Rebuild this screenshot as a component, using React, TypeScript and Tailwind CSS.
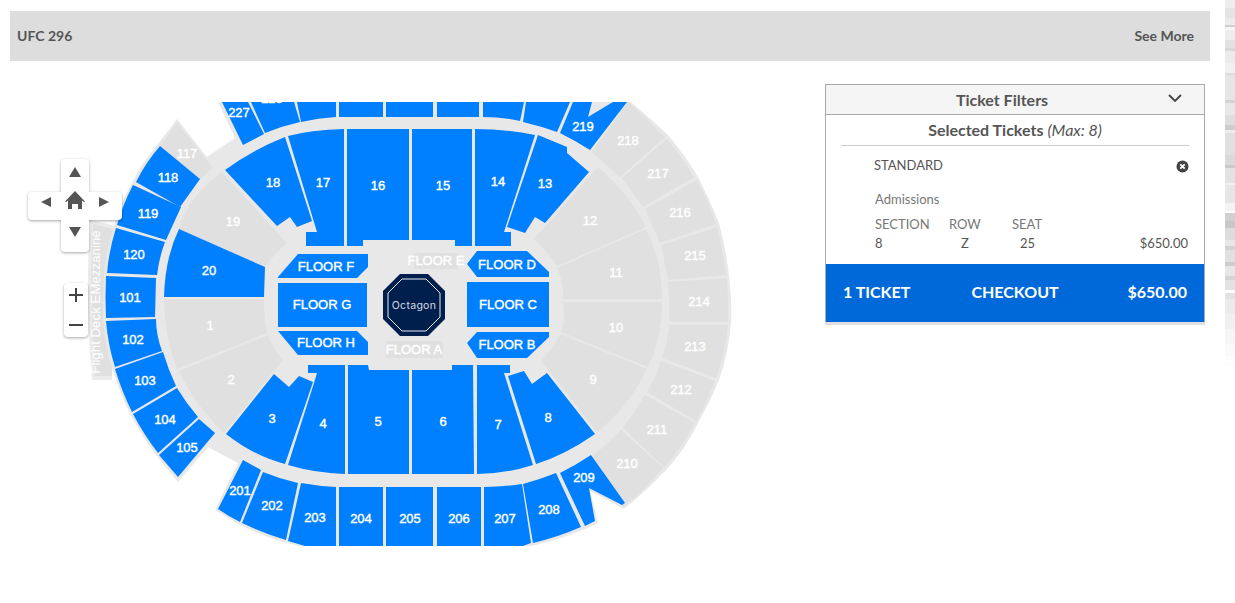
const BLUE = "#007fff";
const GRAY = "#e0e0e0";

const blue: string[] = [
  "M179,229 L265,267 L264,297 L164,297 Q165,258 179,229Z",
  "M274,374 L289,387 L299,376 L313,382 L285,464 Q254,456 226,434Z",
  "M308,365 L345,365 L345,474 Q315,473 288,465 L314,383 L317,373 L308,373Z",
  "M348,365 L368,365 L369,370 L409,370 L409,474 L348,474Z",
  "M412,370 L452,370 L452,365 L473,365 L474,474 L412,474Z",
  "M477,365 L510,365 L510,373 L504,373 L533,465 Q505,474 477,474Z",
  "M508,376 L524,371 L532,384 L547,373 L595,434 Q565,455 536,464Z",
  "M538,135 L567,147 L567,153 L589,172 L545,223 L535,217 L525,233 L507,227Z",
  "M475,129 Q505,129 535,135 L504,232 L511,232 L511,246 L475,246Z",
  "M412,129 L472,129 L472,246 L455,246 L455,240 L412,240Z",
  "M347,129 L409,129 L409,240 L363,240 L363,246 L347,246Z",
  "M288,136 Q310,130 344,129 L344,246 L306,246 L306,232 L317,232Z",
  "M225,170 Q252,150 285,137 L312,221 L297,227 L290,217 L277,226Z",
  "M160,146 L200,179 L180,207 L136,182 Q146,162 160,146Z",
  "M133,185 L181,207 L166,240 L117,225 Q123,204 133,185Z",
  "M116,228 L165,242 Q159,258 157,275 L107,273 Q109,250 116,228Z",
  "M106,276 L156,278 L155,317 L106,318 Q105,297 106,276Z",
  "M106,321 L156,319 Q156,335 162,351 L115,367 Q108,345 106,321Z",
  "M115,369 L163,352 Q168,369 176,386 L132,412 Q122,392 115,369Z",
  "M133,414 L177,388 Q186,403 198,417 L158,453 Q144,435 133,414Z",
  "M159,455 L199,419 L215,433 L178,477Z",
  "M222,102 L248,102 L264,134 L243,145Z",
  "M251,102 L294,102 L300,122 Q282,126 265,133Z",
  "M297,102 L336,102 L336,117 Q318,118 301,122Z",
  "M339,102 L383,102 L383,117 L339,117Z",
  "M386,102 L433,102 L433,117 L386,117Z",
  "M437,102 L479,102 L479,117 L437,117Z",
  "M483,102 L524,102 L520,121 Q502,117 483,117Z",
  "M526,102 L570,102 L557,132 Q540,126 523,122Z",
  "M573,102 L592,102 L588,117 L613,102 L627,102 L590,150 Q576,141 560,133Z",
  "M243,460 L261,470 L240,522 Q228,516 218,509Z",
  "M263,472 Q280,479 298,483 L286,540 Q263,533 242,523Z",
  "M301,483 Q318,486 336,487 L336,546 L305,546 L288,541Z",
  "M339,487 L383,487 L383,546 L339,546Z",
  "M386,487 L433,487 L433,546 L386,546Z",
  "M437,487 L481,487 L481,546 L437,546Z",
  "M484,487 Q503,487 522,484 L531,543 L523,546 L484,546Z",
  "M523,484 Q541,479 556,473 L581,527 Q558,537 533,543Z",
  "M560,473 Q576,465 591,455 L625,503 L622,505 L589,488 L595,521 L585,526Z",
  "M298,254 L368,254 L368,267 L357,278 L278,278 L278,277Z",
  "M278,283 H367 V327 H278Z",
  "M278,331 L357,331 L368,342 L368,355 L298,355Z",
  "M467,264 L477,251 L527,251 L549,272 L549,277 L477,277Z",
  "M467,282 H549 V327 H467Z",
  "M467,343 L477,332 L549,332 L549,337 L527,358 L477,358Z",
];

const gray: string[] = [
  "M177,123 L213,168 L200,179 L160,146Z",
  "M179,229 Q188,197 222,172 L287,243 Q274,254 265,267Z",
  "M164,299 L264,299 Q264,318 267,333 L177,369 Q164,335 164,299Z",
  "M179,371 L268,335 Q273,349 283,360 L224,433 Q195,405 179,371Z",
  "M541,361 Q553,348 560,334 L647,369 Q630,405 597,432Z",
  "M563,302 L662,302 Q662,338 648,367 L561,332 Q566,318 563,302Z",
  "M557,268 L646,229 Q662,260 662,299 L563,299 Q564,282 557,268Z",
  "M598,167 Q630,195 646,227 L557,266 Q548,252 534,239Z",
  "M628,102 Q648,119 665,137 L620,177 L592,152Z",
  "M667,139 Q682,157 694,177 L643,207 L622,178Z",
  "M697,180 Q708,201 716,224 L660,243 L645,209Z",
  "M717,227 Q723,251 726,275 L668,280 L661,245Z",
  "M727,278 Q729,300 728,322 L669,322 Q670,302 668,282Z",
  "M728,325 Q726,352 716,378 L662,358 Q668,342 669,325Z",
  "M715,381 Q707,402 696,421 L647,392 Q656,378 661,361Z",
  "M695,423 Q682,448 664,467 L623,428 Q635,412 645,395Z",
  "M663,468 Q645,490 623,507 L592,456 Q608,444 621,430Z",
];

const labels: [string, number, number][] = [
  ["227", 239, 112], ["228", 272, 98], ["219", 583, 126], ["218", 628, 140], ["217", 658, 173],
  ["216", 680, 212], ["215", 695, 255], ["214", 699, 301], ["213", 695, 346], ["212", 681, 389],
  ["211", 657, 429], ["210", 627, 463], ["209", 584, 477], ["208", 549, 509], ["207", 505, 518],
  ["206", 459, 518], ["205", 410, 518], ["204", 361, 518], ["203", 315, 517], ["202", 272, 505],
  ["201", 240, 490], ["105", 187, 447], ["104", 165, 419], ["103", 145, 380], ["102", 133, 339],
  ["101", 130, 297], ["120", 134, 254], ["119", 148, 213], ["118", 168, 177], ["117", 187, 153],
  ["20", 209, 270], ["19", 233, 221], ["18", 273, 182], ["17", 323, 182], ["16", 378, 185],
  ["15", 443, 185], ["14", 498, 181], ["13", 545, 183], ["12", 590, 220], ["11", 616, 272],
  ["10", 616, 327], ["9", 593, 379], ["8", 548, 417], ["7", 498, 424], ["6", 443, 421],
  ["5", 378, 421], ["4", 323, 423], ["3", 272, 418], ["2", 231, 379], ["1", 210, 325],
];

const floors: [string, number, number][] = [
  ["FLOOR F", 326, 266], ["FLOOR G", 322, 304], ["FLOOR H", 326, 342],
  ["FLOOR D", 507, 264], ["FLOOR C", 508, 304], ["FLOOR B", 507, 344],
  ["FLOOR E", 436, 260], ["FLOOR A", 414, 349],
];

function SeatMap() {
  return (
    <svg width={790} height={444} viewBox="10 102 790 444" className="block">
      <path d="M90,220 L116,226 L112,380 L92,380 Q85,300 90,220Z" fill="#ebebeb" />
      <path d="M93,224 L114,229 L112,376 L95,376 Q89,300 93,224Z" fill="#e0e0e0" />
      <path
        fill="#e8e8e8"
        d="M218,102 L631,102 Q650,118 668,135 Q685,155 698,177 Q710,200 719,223 Q726,250 729,275 Q732,300 731,322 Q729,352 719,380 Q710,402 698,423 Q685,450 666,470 Q645,492 624,509 L590,491 L598,523 Q570,537 532,546 L300,546 L287,543 Q262,536 240,525 L215,510 L238,463 L208,447 L178,482 L156,455 Q142,436 130,414 Q120,393 112,368 Q105,345 103,320 L103,300 L104,274 Q106,250 114,226 Q120,204 133,181 Q143,161 158,144 L177,119 L207,157 L235,138 Z"
      />
      {gray.map((d, i) => (
        <path key={i} d={d} fill={GRAY} />
      ))}
      {blue.map((d, i) => (
        <path key={i} d={d} fill={BLUE} />
      ))}
      <rect x={414} y={253} width={44} height={16} fill={GRAY} />
      <rect x={386} y={341} width={57} height={17} fill={GRAY} />

      <path d="M400,274 L428,274 L445,291 L445,319 L428,336 L400,336 L383,319 L383,291Z" fill="#001f4d" />
      <path d="M402,279 L426,279 L440,293 L440,317 L426,331 L402,331 L388,317 L388,293Z" fill="none" stroke="#e6ebf2" strokeWidth={1} />
      <text x={414} y={305} textAnchor="middle" dominantBaseline="central" fontSize={10.5} letterSpacing={0.3} fill="#d5dce6" fontFamily="Inter, sans-serif">
        Octagon
      </text>

      <g fontFamily="'Liberation Sans', Arial, sans-serif" fontSize={13} fill="#ffffff" stroke="#ffffff" strokeWidth={0.4} textAnchor="middle" dominantBaseline="central">
        {labels.map(([t, x, y]) => (
          <text key={t} x={x} y={y}>{t}</text>
        ))}
        {floors.map(([t, x, y]) => (
          <text key={t} x={x} y={y}>{t}</text>
        ))}
      </g>
      <text
        x={95}
        y={302}
        transform="rotate(-90 95 302)"
        textAnchor="middle"
        dominantBaseline="central"
        fontSize={13.3}
        fill="#ffffff"
        fontFamily="'Liberation Sans', Arial, sans-serif"
      >
        Flight Deck EMezzanine
      </text>
    </svg>
  );
}

function Controls() {
  return (
    <>
      <div className="absolute left-[51px] top-[57px] h-[93px] w-[28px] rounded-sm bg-white shadow-[0_1px_3px_rgba(0,0,0,0.35)]" />
      <div className="absolute left-[18px] top-[90px] h-[28px] w-[94px] rounded-sm bg-white shadow-[0_1px_3px_rgba(0,0,0,0.35)]" />
      <div className="absolute left-[51px] top-[60px] h-[85px] w-[28px] bg-white" />
      <svg width={100} height={100} viewBox="28 159 100 100" className="absolute left-[18px] top-[57px]">
        <path d="M75,167 L81,177 L69,177Z" fill="#555" />
        <path d="M75,237 L81,227 L69,227Z" fill="#555" />
        <path d="M41,202 L51,197 L51,207Z" fill="#555" />
        <path d="M109,202 L99,197 L99,207Z" fill="#555" />
        <path d="M65,201.5 L75,191 L85,201.5 L84,202 L82,200.5 L82,209 L78,209 L78,204 L72,204 L72,209 L68,209 L68,200.5 L66,202Z" fill="#555" />
      </svg>
      <div className="absolute left-[54px] top-[181px] flex h-[54px] w-[24px] flex-col items-center justify-between rounded-sm bg-white py-[4px] shadow-[0_1px_3px_rgba(0,0,0,0.35)]">
        <svg width={16} height={16} viewBox="0 0 16 16"><path d="M8,1 V15 M1,8 H15" stroke="#444" strokeWidth={2} /></svg>
        <svg width={16} height={16} viewBox="0 0 16 16"><path d="M1,8 H15" stroke="#444" strokeWidth={2} /></svg>
      </div>
    </>
  );
}

function TicketPanel() {
  return (
    <div className="mt-[23px] w-[380px] border border-[#aaaaaa] border-b-0 shadow-[0_3px_0_#e0e0e0] text-[#555555]">
      <div className="relative flex h-[30px] items-center justify-center border-b border-[#aaaaaa] bg-[#f5f5f5] pr-[26px] text-[16px] font-bold">
        Ticket Filters
        <svg width={14} height={8} viewBox="0 0 14 8" className="absolute right-[22px] top-[9px]">
          <path d="M1,1 L7,7 L13,1" fill="none" stroke="#444" strokeWidth={1.8} />
        </svg>
      </div>
      <div className="mx-[15px] flex h-[31px] items-center justify-center border-b border-[#cccccc] text-[16px]">
        <span className="font-bold">Selected Tickets</span>
        <span className="ml-1 italic">(Max: 8)</span>
      </div>
      <div className="px-[16px] h-[118px] text-[13px]">
        <div className="flex h-[28px] items-center justify-between pl-[32px] pt-[12px]">
          <span>STANDARD</span>
          <svg width={13} height={13} viewBox="0 0 13 13" className="-mr-[1px]">
            <circle cx={6.5} cy={6.5} r={6} fill="#444" />
            <path d="M4.3,4.3 L8.7,8.7 M8.7,4.3 L4.3,8.7" stroke="#fff" strokeWidth={1.8} />
          </svg>
        </div>
        <div className="mt-[16px] pl-[33px] text-[#777777]">Admissions</div>
        <div className="mt-[5px] flex pl-[33px] leading-[18px] text-[#777777]">
          <span className="w-[74px]">SECTION</span>
          <span className="w-[63px]">ROW</span>
          <span>SEAT</span>
        </div>
        <div className="flex pl-[33px] leading-[20px]">
          <span className="w-[86px]">8</span>
          <span className="w-[59px]">Z</span>
          <span>25</span>
          <span className="ml-auto">$650.00</span>
        </div>
      </div>
      <div className="grid h-[58px] grid-cols-3 items-center bg-[#0069d9] px-[17px] pb-[2px] text-[16px] font-bold text-white">
        <span>1 TICKET</span>
        <span className="text-center">CHECKOUT</span>
        <span className="text-right">$650.00</span>
      </div>
    </div>
  );
}

const strip: [number, string][] = [
  [8, "#eeeeee"], [10, "#e4e4e4"], [7, "#ececec"], [2, "#cfcfcf"], [3, "#f6f6f6"], [10, "#ededed"], [8, "#e2e2e2"],
  [3, "#d8d8d8"], [12, "#ebebeb"], [10, "#f1f1f1"], [2, "#dcdcdc"], [25, "#e6e6e6"], [3, "#d4d4d4"], [12, "#e8e8e8"],
  [10, "#dedede"], [5, "#cdcdcd"], [3, "#ededed"], [22, "#e0e0e0"], [10, "#dadada"], [3, "#c9c9c9"], [15, "#e3e3e3"],
  [2, "#f2f2f2"], [18, "#e6e6e6"], [8, "#f4f4f4"], [2, "#ffffff"], [8, "#d0d0d0"], [7, "#c8c8c8"], [12, "#dcdcdc"],
  [6, "#e7e7e7"], [4, "#d2d2d2"], [12, "#e0e0e0"], [4, "#cccccc"], [10, "#e6e6e6"], [4, "#d4d4d4"], [10, "#e3e3e3"],
  [3, "#ffffff"], [6, "#e2e2e2"], [15, "#ebebeb"], [15, "#f0f0f0"], [15, "#f6f6f6"], [12, "#fafafa"], [10, "#fdfdfd"],
];

export default function App() {
  return (
    <div className="flex h-[603px] w-[1235px] overflow-hidden bg-white font-['Lato',sans-serif]">
      <div className="w-[1225px] shrink-0 pl-[10px] pr-[15px] pt-[11px]">
        <div className="flex h-[50px] items-center justify-between bg-[#dddddd] pb-[2px] pl-[7px] pr-[16px] text-[14px] font-bold text-[#555555]">
          <span>UFC 296</span>
          <span>See More</span>
        </div>
        <div className="flex justify-between">
          <div className="relative mt-[41px] h-[444px] w-[790px]">
            <SeatMap />
            <Controls />
          </div>
          <div className="mr-[5px]">
            <TicketPanel />
          </div>
        </div>
      </div>
      <div className="flex w-[10px] flex-col">
        {strip.map(([h, c], i) => (
          <div key={i} style={{ height: h, backgroundColor: c }} />
        ))}
      </div>
    </div>
  );
}
